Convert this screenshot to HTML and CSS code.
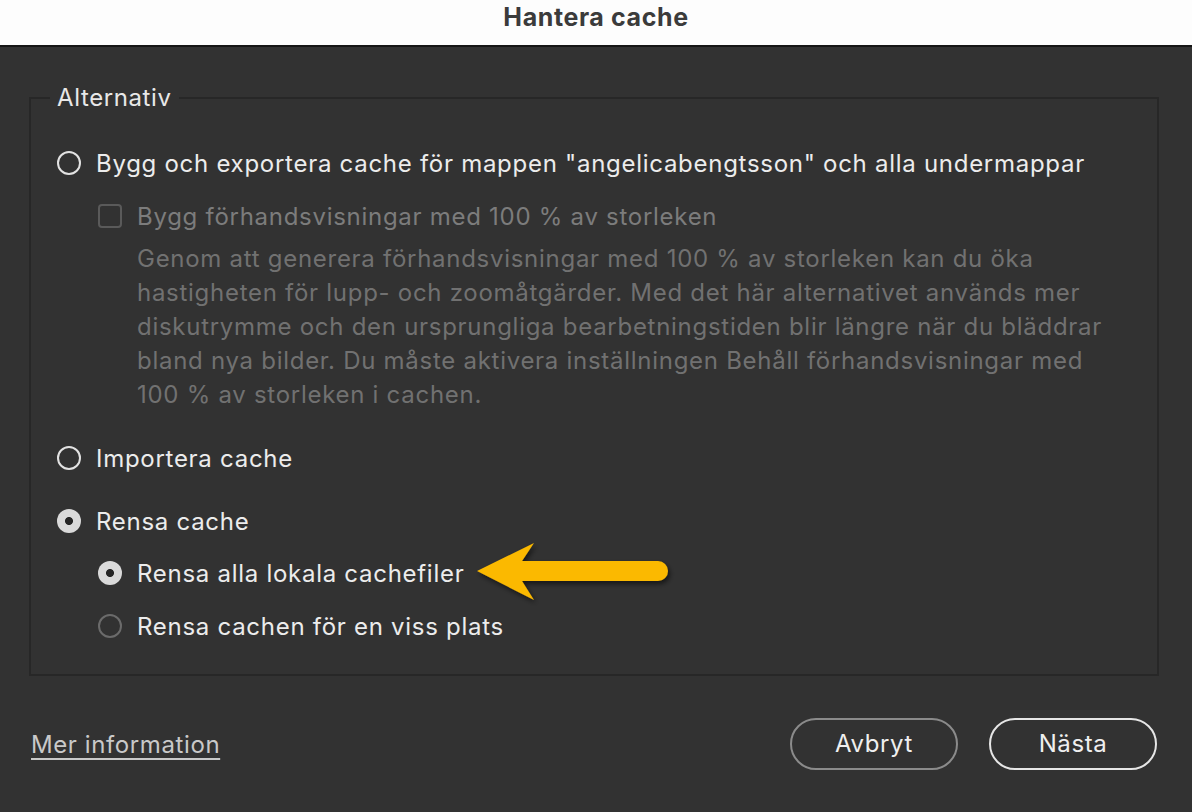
FILE: index.html
```html
<!DOCTYPE html>
<html lang="sv">
<head>
<meta charset="utf-8">
<title>Hantera cache</title>
<link rel="stylesheet" href="styles.css">
</head>
<body>
<div class="window">
  <header class="titlebar">Hantera cache</header>
  <main class="dialog">
    <fieldset class="options">
      <legend class="legend">Alternativ</legend>
      <div class="row">
        <span class="radio"></span>
        <span class="label">Bygg och exportera cache för mappen "angelicabengtsson" och alla undermappar</span>
      </div>
      <div class="sub">
        <div class="row row-check">
          <span class="checkbox"></span>
          <span class="label dim">Bygg förhandsvisningar med 100 % av storleken</span>
        </div>
        <p class="desc">Genom att generera förhandsvisningar med 100 % av storleken kan du öka<br>hastigheten för lupp- och zoomåtgärder. Med det här alternativet används mer<br>diskutrymme och den ursprungliga bearbetningstiden blir längre när du bläddrar<br>bland nya bilder. Du måste aktivera inställningen Behåll förhandsvisningar med<br>100 % av storleken i cachen.</p>
      </div>
      <div class="row row-import">
        <span class="radio"></span>
        <span class="label">Importera cache</span>
      </div>
      <div class="row row-clear">
        <span class="radio on"></span>
        <span class="label">Rensa cache</span>
      </div>
      <div class="sub">
        <div class="row row-local">
          <span class="radio on"></span>
          <span class="label">Rensa alla lokala cachefiler</span>
          <svg class="arrow" width="210" height="70" viewBox="0 0 210 70">
            <defs>
              <filter id="sh" x="-10%" y="-20%" width="130%" height="160%">
                <feDropShadow dx="2" dy="3" stdDeviation="2.5" flood-color="#000" flood-opacity="0.55"/>
              </filter>
            </defs>
            <path filter="url(#sh)" fill="#fbb900" d="M5 33 L62 5 L50 23 L186 23 A10 10 0 0 1 186 43 L50 43 L62 62 Z"/>
          </svg>
        </div>
        <div class="row row-place">
          <span class="radio off"></span>
          <span class="label">Rensa cachen för en viss plats</span>
        </div>
      </div>
    </fieldset>
    <footer class="footer">
      <a class="more" href="#">Mer information</a>
      <div class="buttons">
        <button class="btn btn-cancel">Avbryt</button>
        <button class="btn btn-next">Nästa</button>
      </div>
    </footer>
  </main>
</div>
</body>
</html>
```
FILE: styles.css
```css
* { box-sizing: border-box; }
html, body { margin: 0; padding: 0; }
body {
  width: 1192px;
  height: 812px;
  overflow: hidden;
  background: #323232;
  font-family: Inter, "Noto Sans", "Liberation Sans", sans-serif;
}
.window { display: flex; flex-direction: column; height: 812px; }
.titlebar {
  height: 47px;
  background: #fdfdfd;
  border-bottom: 2px solid #161616;
  color: #3b3b3b;
  font-family: Inter, "Liberation Sans", sans-serif;
  font-weight: 700;
  font-size: 25px;
  line-height: 35px;
  text-align: center;
  letter-spacing: 0.6px;
}
.dialog {
  flex: 1;
  padding: 34px 33px 0 29px;
  display: flex;
  flex-direction: column;
}
.options {
  margin: 0;
  border: 2px solid #272727;
  padding: 31px 26px 31px 26px;
  min-width: 0;
}
.legend {
  margin-left: -7px;
  padding: 0 7px;
  color: #e8e8e8;
  font-size: 24px;
  letter-spacing: 0.6px;
  line-height: 34px;
}
.row {
  display: flex;
  align-items: center;
  height: 34px;
  gap: 15px;
  color: #ececec;
  font-size: 24px;
  letter-spacing: 0.72px;
}
.label { white-space: nowrap; }
.sub { padding-left: 41px; }
.radio {
  width: 24px;
  height: 24px;
  flex: none;
  border-radius: 50%;
  border: 2px solid #e2e2e2;
}
.radio.on {
  border: none;
  background: radial-gradient(circle, #262626 0 3.6px, #dadada 4.4px);
}
.radio.off { border-color: #6b6b6b; }
.checkbox {
  width: 24px;
  height: 24px;
  flex: none;
  border: 2px solid #5a5a5a;
  border-radius: 4px;
}
.dim { color: #7c7c7c; }
.row-check { margin-top: 19px; }
.desc {
  margin: 9px 0 0 39px;
  color: #717171;
  font-size: 24px;
  letter-spacing: 0.72px;
  line-height: 34px;
  white-space: nowrap;
}
.row-import { margin-top: 29px; }
.row-clear { margin-top: 29px; }
.row-local { margin-top: 18px; position: relative; }
.row-place { margin-top: 19px; }
.arrow {
  position: absolute;
  left: 374px;
  top: -18px;
}
.footer {
  margin-top: 42px;
  display: flex;
  align-items: center;
  justify-content: space-between;
  padding-left: 2px;
  padding-right: 2px;
}
.more {
  color: #c9c9c9;
  font-size: 24px;
  letter-spacing: 0.6px;
  text-decoration: underline;
  text-underline-offset: 5px;
  text-decoration-thickness: 1.5px;
}
.buttons { display: flex; gap: 31px; }
.btn {
  width: 168px;
  height: 52px;
  border-radius: 26px;
  background: transparent;
  color: #efefef;
  font-family: Inter, "Noto Sans", "Liberation Sans", sans-serif;
  font-size: 24px;
  letter-spacing: 0.6px;
  padding: 0 0 2px 0;
}
.btn-cancel { border: 2px solid #8b8b8b; }
.btn-next { border: 2px solid #e6e6e6; }
```
